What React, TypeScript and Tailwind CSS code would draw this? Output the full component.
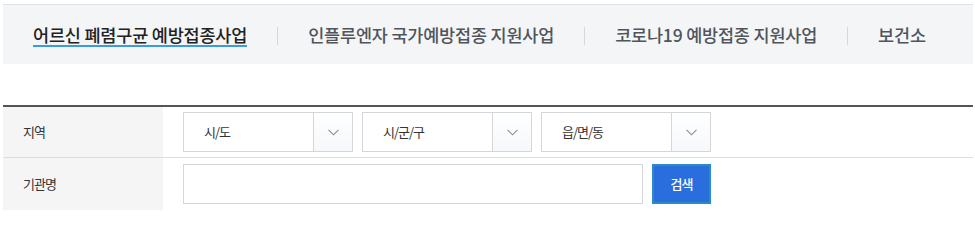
import React, { useState } from "react";

const tabs = [
  "어르신 폐렴구균 예방접종사업",
  "인플루엔자 국가예방접종 지원사업",
  "코로나19 예방접종 지원사업",
  "보건소",
];

const font = { fontFamily: '"Noto Sans CJK KR", "Noto Sans KR", sans-serif' };

const Chevron = () => (
  <svg width="11" height="7" viewBox="0 0 11 7" fill="none">
    <path d="M0.5 0.8 L5.5 5.8 L10.5 0.8" stroke="#8a8d92" strokeWidth="1.1" />
  </svg>
);

const SelectBox = ({ label }: { label: string }) => (
  <div className="flex h-[40px] w-[170px] border border-[#d5d6da] bg-white">
    <div className="flex flex-1 items-center pl-[20px] text-[13px] tracking-[-1px] text-[#333]">
      {label}
    </div>
    <div className="flex w-[39px] items-center justify-center border-l border-[#d5d6da] bg-gradient-to-b from-white to-[#f6f8fb]">
      <Chevron />
    </div>
  </div>
);

export default function App() {
  const [active, setActive] = useState(0);
  const [keyword, setKeyword] = useState("");

  return (
    <div className="mx-[3px] w-[970px] bg-white" style={font}>
      <div className="mt-[4px] flex h-[60px] items-center border-t border-[#e1e2e4] bg-[#f4f5f7] pl-[30px]">
        {tabs.map((t, i) => (
          <React.Fragment key={t}>
            {i > 0 && <span className="mx-[30px] mt-[2px] h-[18px] w-px bg-[#d6d8db]" />}
            <button
              onClick={() => setActive(i)}
              className={`mt-[2px] border-b-2 text-[17.5px] font-medium leading-[20px] tracking-[-0.2px] ${
                active === i
                  ? "border-[#3b9be2] text-[#222]"
                  : "border-transparent text-[#50555c]"
              }`}
            >
              {t}
            </button>
          </React.Fragment>
        ))}
      </div>

      <div className="mt-[41px] border-t-2 border-[#555]">
        <div className="flex border-b border-[#dedede]">
          <div className="flex w-[160px] items-center bg-[#f5f5f5] pl-[20px] text-[13px] tracking-[-1px] text-[#333]">
            지역
          </div>
          <div className="flex gap-[9px] py-[5px] pl-[20px]">
            <SelectBox label="시/도" />
            <SelectBox label="시/군/구" />
            <SelectBox label="읍/면/동" />
          </div>
        </div>
        <div className="flex">
          <div className="flex w-[160px] items-center bg-[#f5f5f5] pl-[20px] text-[13px] tracking-[-1px] text-[#333]">
            기관명
          </div>
          <div className="flex gap-[9px] pb-[6px] pl-[20px] pt-[6px]">
            <input
              value={keyword}
              onChange={(e) => setKeyword(e.target.value)}
              className="h-[40px] w-[460px] border border-[#d5d6da] px-[12px] text-[13px] outline-none"
            />
            <button className="h-[40px] w-[59px] border-2 border-[#2b8bc8] bg-[#2a6edd] text-[13px] font-medium tracking-[-1px] text-white">
              검색
            </button>
          </div>
        </div>
      </div>
    </div>
  );
}
